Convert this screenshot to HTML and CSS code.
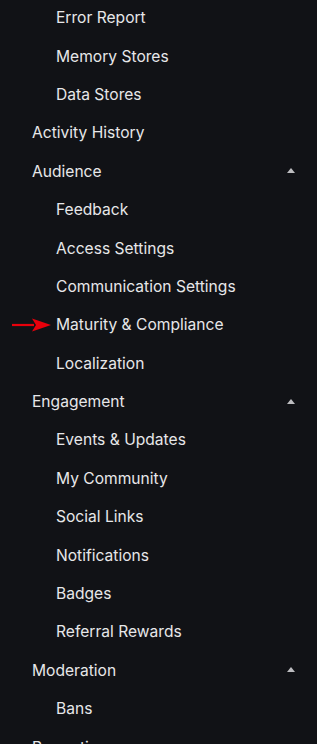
FILE: index.html
```html
<!DOCTYPE html>
<html>
<head>
<meta charset="utf-8">
<link rel="stylesheet" href="styles.css">
</head>
<body>
<nav class="menu">
  <div class="item sub">Error Report</div>
  <div class="item sub">Memory Stores</div>
  <div class="item sub">Data Stores</div>
  <div class="item top">Activity History</div>
  <div class="item top">Audience<span class="caret"></span></div>
  <div class="item sub">Feedback</div>
  <div class="item sub">Access Settings</div>
  <div class="item sub">Communication Settings</div>
  <div class="item sub marked">
    <svg class="arrow" width="40" height="14" viewBox="0 0 40 14"><line x1="0" y1="7" x2="22" y2="7" stroke="#e8000b" stroke-width="2.2"/><polygon points="20,0.5 39,7 20,13.5 24,7" fill="#e8000b"/></svg>
    Maturity &amp; Compliance</div>
  <div class="item sub">Localization</div>
  <div class="item top">Engagement<span class="caret"></span></div>
  <div class="item sub">Events &amp; Updates</div>
  <div class="item sub">My Community</div>
  <div class="item sub">Social Links</div>
  <div class="item sub">Notifications</div>
  <div class="item sub">Badges</div>
  <div class="item sub">Referral Rewards</div>
  <div class="item top">Moderation<span class="caret"></span></div>
  <div class="item sub">Bans</div>
  <div class="item top">Promotions</div>
</nav>
</body>
</html>
```
FILE: styles.css
```css
html, body {
  margin: 0;
  padding: 0;
  background: #111216;
  overflow: hidden;
}
.menu {
  display: flex;
  flex-direction: column;
  margin-top: -1px;
  font-family: Inter, "Noto Sans", sans-serif;
  font-size: 15.6px;
  color: #e7e7e9;
}
.item {
  position: relative;
  height: 38.4px;
  display: flex;
  align-items: center;
  line-height: 20px;
}
.top {
  padding-left: 32px;
}
.sub {
  padding-left: 56px;
}
.caret {
  position: absolute;
  left: 287px;
  top: 50%;
  margin-top: -3.5px;
  width: 0;
  height: 0;
  border-left: 4px solid transparent;
  border-right: 4px solid transparent;
  border-bottom: 5px solid #bdbdc0;
}
.arrow {
  position: absolute;
  left: 12px;
  top: 50%;
  margin-top: -7px;
}
```
